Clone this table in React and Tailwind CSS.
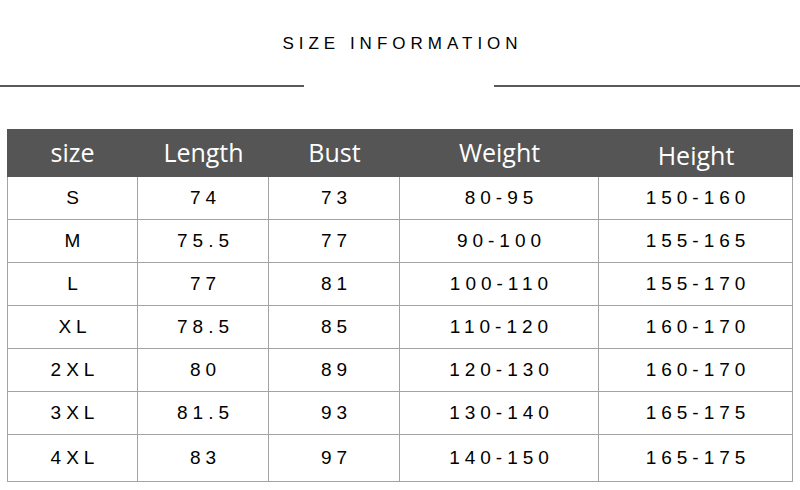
import React from "react";

const cols = ["w-[131px]", "w-[131px]", "w-[131px]", "w-[199px]", "w-[194px]"];

const head = ["size", "Length", "Bust", "Weight", "Height"];

const rows = [
  ["S", "74", "73", "80-95", "150-160"],
  ["M", "75.5", "77", "90-100", "155-165"],
  ["L", "77", "81", "100-110", "155-170"],
  ["XL", "78.5", "85", "110-120", "160-170"],
  ["2XL", "80", "89", "120-130", "160-170"],
  ["3XL", "81.5", "93", "130-140", "165-175"],
  ["4XL", "83", "97", "140-150", "165-175"],
];

export default function App() {
  return (
    <div className="w-[800px] h-[490px] bg-white overflow-hidden">

      {/* TITLE */}
      <div className="pt-[34px] flex justify-center">
        <h1 className="text-[17px] leading-[20px] tracking-[5px] pl-[5px] text-black font-['Liberation_Sans',Arial,sans-serif]">
          SIZE INFORMATION
        </h1>
      </div>

      {/* DIVIDER */}
      <div className="flex justify-between mt-[31px]">
        <div className="w-[304px] h-[2px] bg-[#5a5a5a]" />
        <div className="w-[306px] h-[2px] bg-[#5a5a5a]" />
      </div>

      {/* TABLE */}
      <div className="ml-[7px] mt-[42px] w-[786px]">
        <div className="flex h-[48px] bg-[#555555] text-white text-[25px] font-['Open_Sans','Noto_Sans',sans-serif]">
          {head.map((h, i) => (
            <div
              key={h}
              className={`${cols[i]} flex items-center justify-center ${i === 4 ? "pt-[6px]" : ""}`}
            >
              {h}
            </div>
          ))}
        </div>

        {rows.map((r, ri) => (
          <div
            key={r[0]}
            className={`flex ${ri === rows.length - 1 ? "h-[47px]" : "h-[43px]"} text-[19px] text-black font-['Liberation_Sans',Arial,sans-serif]`}
          >
            {r.map((c, ci) => (
              <div
                key={ci}
                className={`${cols[ci]} flex items-center justify-center border-b border-r border-[#a3a3a3] ${ci === 0 ? "border-l" : ""} tracking-[5px] pl-[5px]`}
              >
                {c}
              </div>
            ))}
          </div>
        ))}
      </div>
    </div>
  );
}
